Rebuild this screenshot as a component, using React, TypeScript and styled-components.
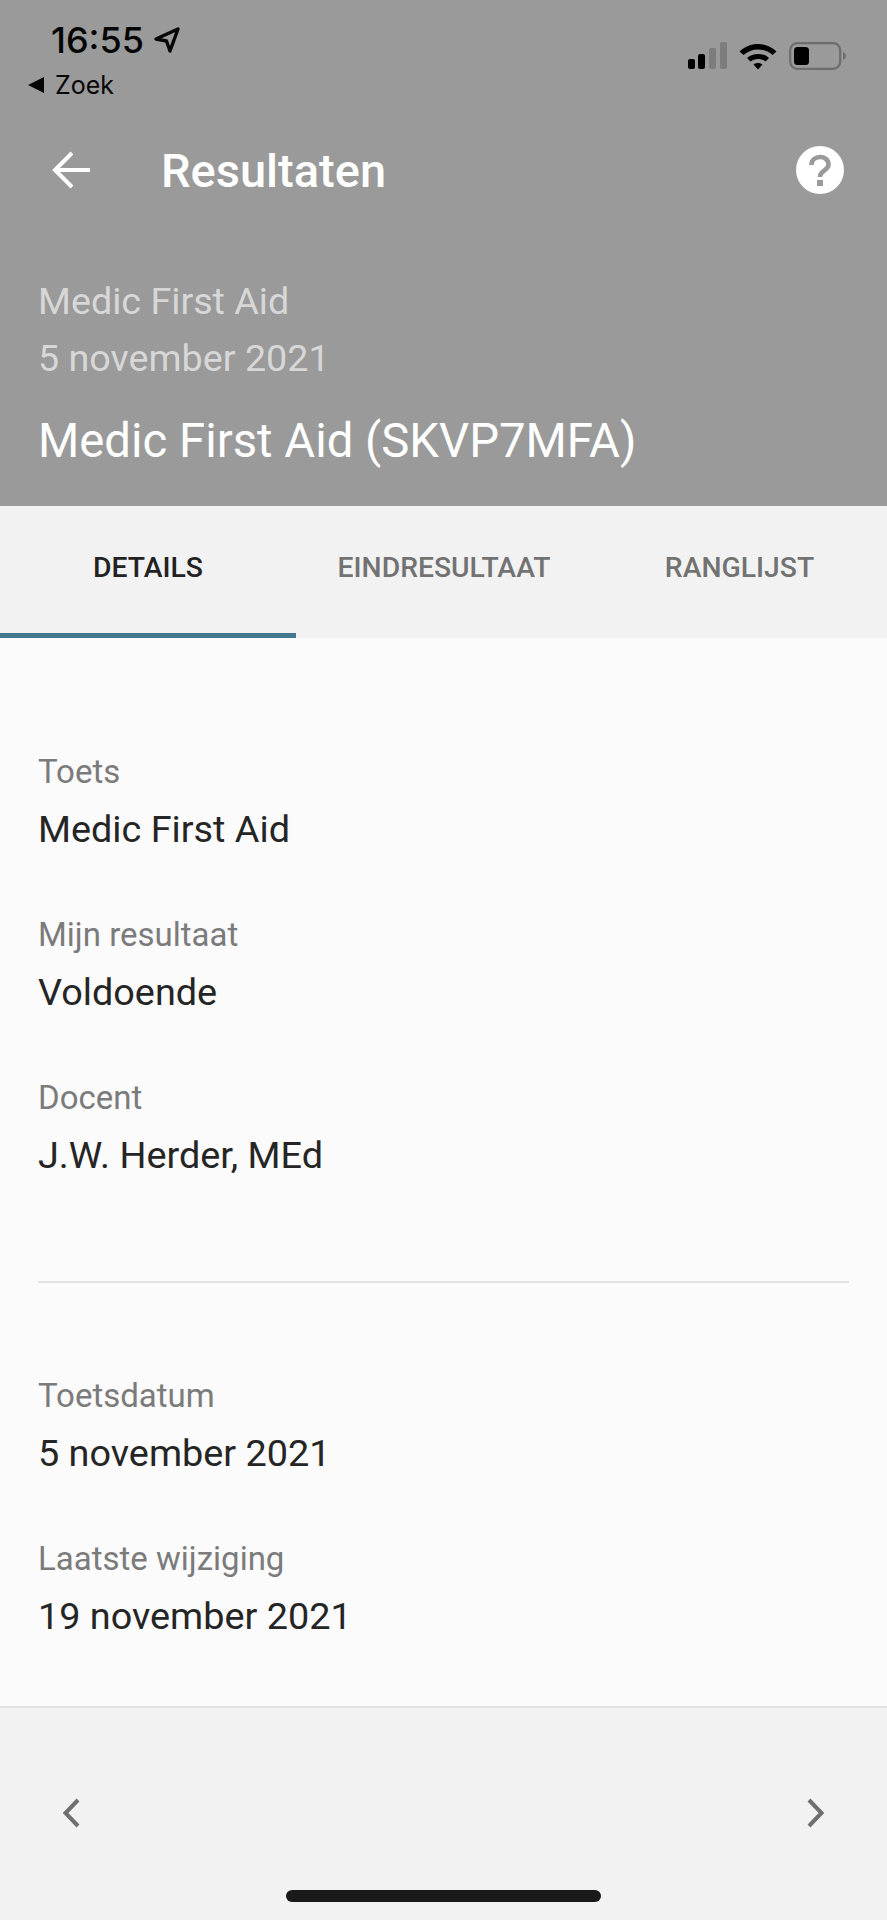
import styled, { createGlobalStyle } from "styled-components";

const GlobalStyle = createGlobalStyle`
  html, body {
    margin: 0;
    padding: 0;
    background: #fbfbfb;
  }
  * {
    box-sizing: border-box;
  }
`;

const Screen = styled.div`
  width: 887px;
  height: 1920px;
  display: flex;
  flex-direction: column;
  overflow: hidden;
  font-family: Roboto, "Liberation Sans", sans-serif;
  background: #fbfbfb;
`;

/* header */

const Header = styled.header`
  height: 506px;
  flex: none;
  background: #9a9a9a;
  display: flex;
  flex-direction: column;
`;

const StatusBar = styled.div`
  height: 111px;
  padding: 20px 41px 0 28px;
  display: flex;
  justify-content: space-between;
`;

const StatusLeft = styled.div`
  display: flex;
  flex-direction: column;
`;

const Clock = styled.div`
  display: flex;
  align-items: center;
  gap: 9px;
  padding-left: 23px;
  height: 40px;
  font-family: Inter, sans-serif;
  font-size: 36px;
  font-weight: 500;
  color: #050505;
`;

const BackToSearch = styled.div`
  display: flex;
  align-items: center;
  gap: 10px;
  height: 30px;
  margin-top: 10px;
  font-family: Inter, sans-serif;
  font-size: 25px;
  color: #050505;
`;

const StatusRight = styled.div`
  display: flex;
  align-items: flex-start;
  gap: 12px;
  padding-top: 22px;
`;

const Toolbar = styled.div`
  height: 118px;
  padding: 0 43px 0 52px;
  display: flex;
  align-items: center;
`;

const Title = styled.h1`
  margin: 0 0 0 71px;
  flex: 1;
  font-size: 47px;
  font-weight: 500;
  color: #fff;
`;

const Course = styled.div`
  padding: 44px 38px 0;
  display: flex;
  flex-direction: column;
`;

const CourseMeta = styled.div`
  font-size: 37.7px;
  line-height: 57px;
  color: #d7d7d7;
`;

const CourseName = styled.div`
  margin-top: 26px;
  font-size: 47.3px;
  line-height: 56px;
  color: #fff;
`;

/* tabs */

const Tabs = styled.nav`
  height: 132px;
  flex: none;
  background: #f2f2f2;
  display: grid;
  grid-template-columns: 296px 296px 295px;
`;

const Tab = styled.div<{ $active?: boolean }>`
  display: flex;
  align-items: center;
  justify-content: center;
  padding-bottom: 5px;
  font-size: 28.3px;
  font-weight: 500;
  color: ${(props) => (props.$active ? "#222" : "#727272")};
  border-bottom: 5px solid ${(props) => (props.$active ? "#44788f" : "transparent")};
`;

/* details */

const Content = styled.main`
  flex: 1;
  padding: 20px 38px 0;
  background: #fbfbfb;
`;

const Group = styled.section`
  padding: 94px 0 102px;
  display: flex;
  flex-direction: column;
  gap: 62px;
  &:last-child {
    padding: 93px 0 0;
  }
`;

const Divider = styled.hr`
  margin: 0;
  border: none;
  border-top: 2px solid #e2e2e2;
`;

const Field = styled.div`
  display: flex;
  flex-direction: column;
`;

const Label = styled.div`
  font-size: 33px;
  line-height: 40px;
  color: #7b7b7b;
`;

const Value = styled.div`
  margin-top: 13px;
  font-size: 37.8px;
  line-height: 48px;
  color: #252525;
`;

/* bottom bar */

const Footer = styled.footer`
  height: 214px;
  flex: none;
  position: relative;
  background: #f2f2f2;
  border-top: 2px solid #e4e4e4;
  padding: 0 60px;
`;

const Pager = styled.div`
  height: 212px;
  padding-bottom: 2px;
  display: flex;
  align-items: center;
  justify-content: space-between;
`;

const HomeBar = styled.div`
  position: absolute;
  left: 286px;
  bottom: 18px;
  width: 315px;
  height: 12px;
  border-radius: 6px;
  background: #1a1a1a;
`;

function Signal() {
  return (
    <svg width="39" height="27" viewBox="0 0 39 27">
      <rect x="0" y="17" width="7" height="10" rx="2" fill="#000" />
      <rect x="10" y="12" width="7" height="15" rx="2" fill="#000" />
      <rect x="21" y="6" width="7" height="21" rx="2" fill="#7d7d7d" />
      <rect x="32" y="0" width="7" height="27" rx="2" fill="#7d7d7d" />
    </svg>
  );
}

function Wifi() {
  return (
    <svg width="38" height="28" viewBox="0 0 38 28">
      <path d="M0.5 9.5C11 -0.5 27 -0.5 37.5 9.5L33.5 13C25.5 5.5 12.5 5.5 4.5 13Z" fill="#000" />
      <path d="M8 16C14 10.5 24 10.5 30 16L26.5 19.5C22.5 16 15.5 16 11.5 19.5Z" fill="#000" />
      <path d="M14.5 22.5C17 20.5 21 20.5 23.5 22.5L19 27.5Z" fill="#000" />
    </svg>
  );
}

function Battery() {
  return (
    <svg width="57" height="28" viewBox="0 0 57 28">
      <rect x="1.2" y="1.2" width="50" height="25.6" rx="7" fill="none" stroke="#6d6d6d" strokeWidth="2.2" />
      <rect x="5" y="5" width="15" height="18" rx="3.5" fill="#000" />
      <path d="M54 10C56 11 57 12.5 57 14C57 15.5 56 17 54 18Z" fill="#6d6d6d" />
    </svg>
  );
}

function Chevron({ flip }: { flip?: boolean }) {
  return (
    <svg width="22" height="30" viewBox="0 0 22 30" style={flip ? { transform: "scaleX(-1)" } : undefined}>
      <path d="M18 2L5.5 15L18 28" fill="none" stroke="#6f6f6f" strokeWidth="4" />
    </svg>
  );
}

const fieldsTop = [
  { label: "Toets", value: "Medic First Aid" },
  { label: "Mijn resultaat", value: "Voldoende" },
  { label: "Docent", value: "J.W. Herder, MEd" },
];

const fieldsBottom = [
  { label: "Toetsdatum", value: "5 november 2021" },
  { label: "Laatste wijziging", value: "19 november 2021" },
];

export default function App() {
  return (
    <Screen>
      <GlobalStyle />
      <Header>
        <StatusBar>
          <StatusLeft>
            <Clock>
              16:55
              <svg width="28" height="28" viewBox="0 0 28 28">
                <path d="M3 13L25 3L17 25L13.5 15Z" fill="none" stroke="#050505" strokeWidth="3.4" strokeLinejoin="round" />
              </svg>
            </Clock>
            <BackToSearch>
              <svg width="17" height="18" viewBox="0 0 17 18">
                <path d="M0 9L16 1V17Z" fill="#050505" />
              </svg>
              Zoek
            </BackToSearch>
          </StatusLeft>
          <StatusRight>
            <Signal />
            <Wifi />
            <Battery />
          </StatusRight>
        </StatusBar>
        <Toolbar>
          <svg width="38" height="38" viewBox="0 0 38 38">
            <path d="M38 19H4M20 2L3 19L20 36" fill="none" stroke="#fff" strokeWidth="4" />
          </svg>
          <Title>Resultaten</Title>
          <svg width="48" height="48" viewBox="0 0 48 48">
            <circle cx="24" cy="24" r="24" fill="#fff" />
            <path d="M15.5 19C15.5 8.5 32.5 8.5 32.5 18.5C32.5 24.5 24 24.5 24 31" fill="none" stroke="#9a9a9a" strokeWidth="4.6" />
            <rect x="21" y="34" width="6" height="6" fill="#9a9a9a" />
          </svg>
        </Toolbar>
        <Course>
          <CourseMeta>Medic First Aid</CourseMeta>
          <CourseMeta>5 november 2021</CourseMeta>
          <CourseName>Medic First Aid (SKVP7MFA)</CourseName>
        </Course>
      </Header>
      <Tabs>
        <Tab $active>DETAILS</Tab>
        <Tab>EINDRESULTAAT</Tab>
        <Tab>RANGLIJST</Tab>
      </Tabs>
      <Content>
        <Group>
          {fieldsTop.map((field) => (
            <Field key={field.label}>
              <Label>{field.label}</Label>
              <Value>{field.value}</Value>
            </Field>
          ))}
        </Group>
        <Divider />
        <Group>
          {fieldsBottom.map((field) => (
            <Field key={field.label}>
              <Label>{field.label}</Label>
              <Value>{field.value}</Value>
            </Field>
          ))}
        </Group>
      </Content>
      <Footer>
        <Pager>
          <Chevron />
          <Chevron flip />
        </Pager>
        <HomeBar />
      </Footer>
    </Screen>
  );
}
